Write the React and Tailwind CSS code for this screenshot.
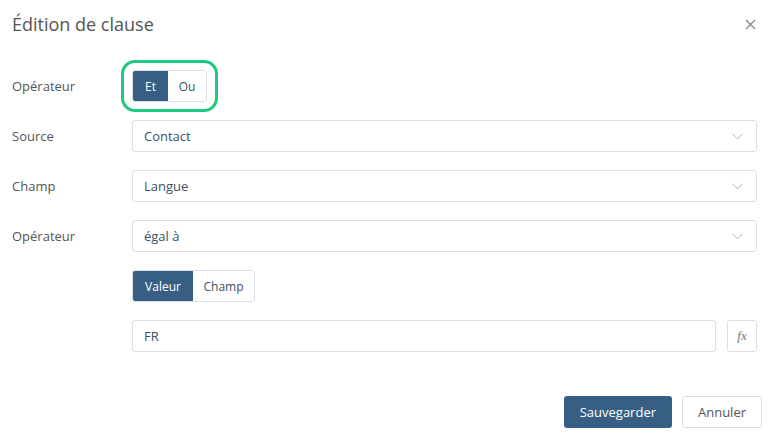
import React, { useState } from "react";

const Chevron = () => (
    <svg width="11" height="7" viewBox="0 0 11 7" className="text-[#aab0bb]">
        <path d="M0.5 0.8 L5.5 5.8 L10.5 0.8" fill="none" stroke="currentColor" strokeWidth="1" />
    </svg>
);

const Row = ({ label, children }) => (
    <div className="flex items-center h-8">
        <div className="w-[120px] shrink-0 text-[13px] text-[#555] pt-px">{label}</div>
        <div className="flex-1 flex items-center">{children}</div>
    </div>
);

const SelectBox = ({ value }) => (
    <div className="flex-1 h-8 border border-[#dcdde6] rounded-[3px] flex items-center justify-between pl-[11px] pr-[13px] pt-px text-[13px] text-[#3d4f63]">
        <span>{value}</span>
        <Chevron />
    </div>
);

const App = () => {
    const [op, setOp] = useState("et");
    const [mode, setMode] = useState("valeur");

    return (
        <div className="w-[773px] h-[438px] bg-white relative" style={{ fontFamily: "'Open Sans', 'Liberation Sans', sans-serif" }}>
            <div className="flex items-center justify-between h-[48px] pl-3 pr-[17px]">
                <h3 className="text-[18px] text-[#555]">Édition de clause</h3>
                <svg width="11" height="11" viewBox="0 0 11 11" className="text-[#8a8a8a]">
                    <path d="M1 1 L10 10 M10 1 L1 10" stroke="currentColor" strokeWidth="1.4" />
                </svg>
            </div>

            <div className="flex flex-col gap-[18px] pl-3 pr-4 mt-[22px]">
                <Row label="Opérateur">
                    <div className="relative">
                        <div className="absolute -left-[11px] -top-[10px] -right-[11px] -bottom-[10px] border-[3px] border-[#1dc97c] rounded-[14px]" />
                        <div className="flex h-8 border border-[#dcdde6] rounded-[3px] overflow-hidden text-[12px]">
                            <button
                                onClick={() => setOp("et")}
                                className={"w-[35px] pt-px " + (op === "et" ? "bg-[#365f83] text-white" : "bg-white text-[#3d4f63]")}
                            >
                                Et
                            </button>
                            <button
                                onClick={() => setOp("ou")}
                                className={"w-[38px] pt-px " + (op === "ou" ? "bg-[#365f83] text-white" : "bg-white text-[#3d4f63]")}
                            >
                                Ou
                            </button>
                        </div>
                    </div>
                </Row>
                <Row label="Source">
                    <SelectBox value="Contact" />
                </Row>
                <Row label="Champ">
                    <SelectBox value="Langue" />
                </Row>
                <Row label="Opérateur">
                    <SelectBox value="égal à" />
                </Row>
                <Row label="">
                    <div className="flex h-8 border border-[#dcdde6] rounded-[3px] overflow-hidden text-[12px]">
                        <button
                            onClick={() => setMode("valeur")}
                            className={"w-[60px] pt-px " + (mode === "valeur" ? "bg-[#365f83] text-white" : "bg-white text-[#3d4f63]")}
                        >
                            Valeur
                        </button>
                        <button
                            onClick={() => setMode("champ")}
                            className={"w-[61px] pt-px " + (mode === "champ" ? "bg-[#365f83] text-white" : "bg-white text-[#3d4f63]")}
                        >
                            Champ
                        </button>
                    </div>
                </Row>
                <Row label="">
                    <div className="flex-1 flex gap-[11px]">
                        <div className="flex-1 h-8 border border-[#dcdde6] rounded-[3px] flex items-center pl-[11px] pt-px text-[13px] text-[#3d4f63]">
                            FR
                        </div>
                        <div className="w-[30px] h-8 border border-[#dcdde6] rounded-[3px] flex items-center justify-center text-[13px] italic text-[#777]" style={{ fontFamily: "'Liberation Serif', serif" }}>
                            fx
                        </div>
                    </div>
                </Row>
            </div>

            <div className="flex justify-end gap-[10px] pr-[11px] mt-[44px]">
                <button className="h-8 px-4 pt-px rounded-[3px] bg-[#365f83] text-white text-[13px]">Sauvegarder</button>
                <button className="h-8 w-[80px] pt-px rounded-[3px] border border-[#dcdde6] bg-white text-[#555] text-[13px]">Annuler</button>
            </div>
        </div>
    );
};

export default App;
